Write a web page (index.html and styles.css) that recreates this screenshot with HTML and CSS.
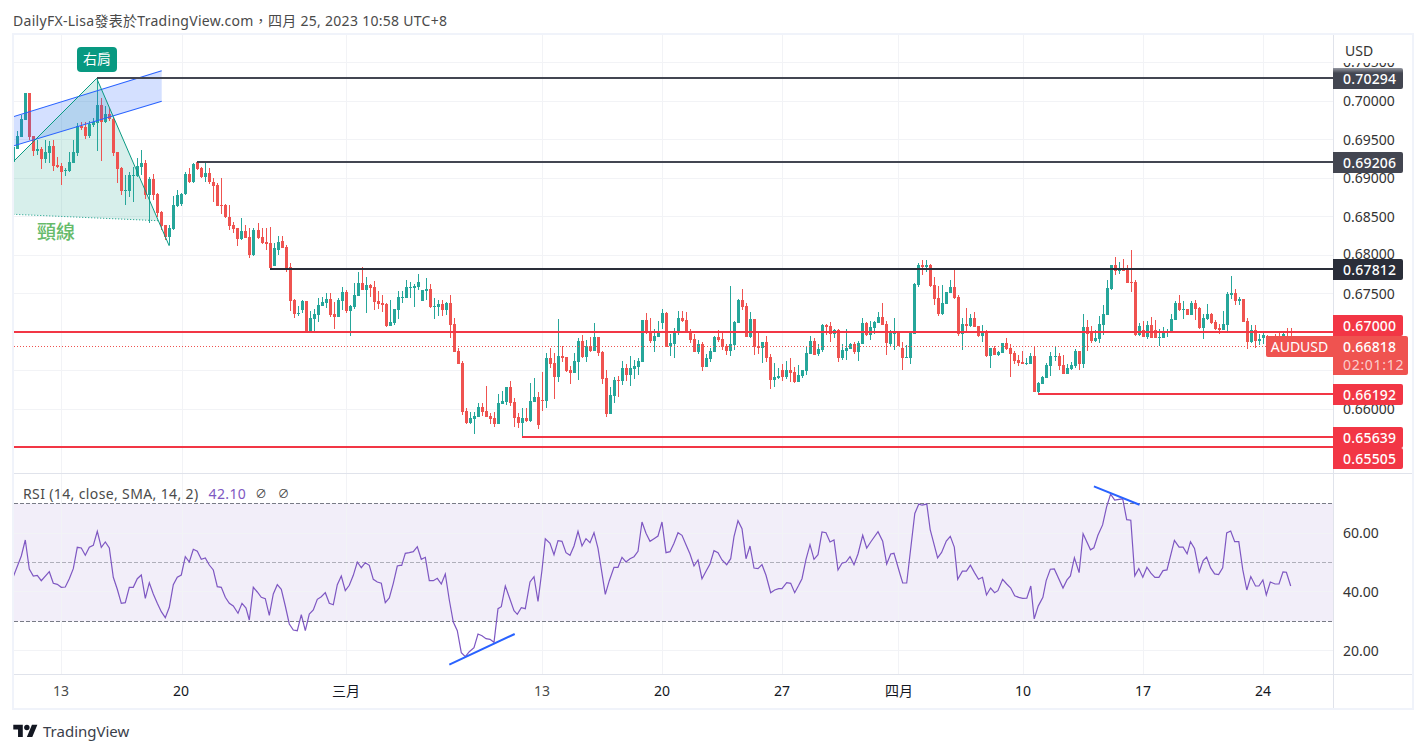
FILE: index.html
```html
<!DOCTYPE html>
<html lang="zh-Hant">
<head>
<meta charset="utf-8">
<title>AUDUSD chart</title>
<link rel="stylesheet" href="styles.css">
</head>
<body>
<header class="caption">DailyFX-Lisa發表於TradingView.com，四月 25, 2023 10:58 UTC+8</header>
<main class="frame">
  <section class="row row-price">
    <div class="plot">
      <svg class="canvas" width="1319" height="438" viewBox="14 35 1319 438" aria-hidden="true">
        <g class="grid">
          <path d="M14 62.5H1333M14 101.5H1333M14 139.5H1333M14 178.5H1333M14 216.5H1333M14 255.5H1333M14 293.5H1333M14 332.5H1333M14 370.5H1333M14 409.5H1333M14 447.5H1333"/>
          <path d="M61.5 35V473M182.5 35V473M346.5 35V473M542.5 35V473M662.5 35V473M782.5 35V473M898.5 35V473M1023.5 35V473M1143.5 35V473M1263.5 35V473"/>
        </g>
        <polygon class="pattern-fill" points="13,161.7 96.7,78.3 158,220.7 13,214.3"/>
        <path id="wicks-up" class="up-wick"/>
        <path id="wicks-down" class="down-wick"/>
        <path id="bodies-up" class="up-body"/>
        <path id="bodies-down" class="down-body"/>
        <polygon class="channel-fill" points="13.3,116.7 161.7,70.7 161.7,101.3 13.3,146"/>
        <path class="channel-line" d="M13.3 116.7L161.7 70.7M13.3 146L161.7 101.3"/>
        <polyline class="pattern-line" points="13.3,161.7 96.7,78.3 169.3,246"/>
        <path class="neck-line" d="M13.3 214.3L158 220.7"/>
        <path class="level level-dark1" d="M97 78H1333M197 162H1333"/>
        <path class="level level-dark2" d="M270 269H1333"/>
        <path class="level level-red" d="M14 332H1333M1038 394H1333M522 437H1333M14 447H1333"/>
        <path class="last-line" d="M14 346.5H1333"/>
      </svg>
      <span class="badge">右肩</span>
      <span class="neck-text">頸線</span>
      <span class="symbol">AUDUSD</span>
    </div>
    <div class="axis">
      <span class="tick t-705">0.70500</span>
      <span class="unit">USD</span>
      <span class="tick t-700">0.70000</span>
      <span class="tick t-695">0.69500</span>
      <span class="tick t-690">0.69000</span>
      <span class="tick t-685">0.68500</span>
      <span class="tick t-680">0.68000</span>
      <span class="tick t-675">0.67500</span>
      <span class="tick t-665">0.66500</span>
      <span class="tick t-660">0.66000</span>
      <span class="tag tag-fade l-70294">0.70294</span>
      <span class="tag tag-grey l-69206">0.69206</span>
      <span class="tag tag-dark l-67812">0.67812</span>
      <span class="tag tag-red l-67000">0.67000</span>
      <span class="tag tag-red l-66192">0.66192</span>
      <span class="tag tag-red l-65639">0.65639</span>
      <span class="tag tag-red l-65505">0.65505</span>
      <div class="last-price"><span>0.66818</span><span class="countdown">02:01:12</span></div>
    </div>
  </section>
  <section class="row row-rsi">
    <div class="plot">
      <svg class="canvas" width="1319" height="200" viewBox="14 474 1319 200" aria-hidden="true">
        <rect class="rsi-band" x="14" y="503.5" width="1319" height="118"/>
        <g class="grid">
          <path d="M14 533.5H1333M14 591.5H1333M14 650.5H1333"/>
          <path d="M61.5 474V674M182.5 474V674M346.5 474V674M542.5 474V674M662.5 474V674M782.5 474V674M898.5 474V674M1023.5 474V674M1143.5 474V674M1263.5 474V674"/>
        </g>
        <path class="rsi-dash" d="M14 503.5H1333M14 621.5H1333"/>
        <path class="rsi-mid" d="M14 562.5H1333"/>
        <polyline id="rsi-line" class="rsi-line"/>
        <path class="trend" d="M449.3 664.7L514.7 634M1093.9 486.4L1139.5 504.8"/>
      </svg>
      <div class="legend">
        <span>RSI (14, close, SMA, 14, 2)</span>
        <span class="legend-value">42.10</span>
        <span class="legend-null">∅</span>
        <span class="legend-null">∅</span>
      </div>
    </div>
    <div class="axis">
      <span class="tick t-r60">60.00</span>
      <span class="tick t-r40">40.00</span>
      <span class="tick t-r20">20.00</span>
    </div>
  </section>
  <section class="row row-time">
    <div class="time-scale">
      <span class="date d-1">13</span>
      <span class="date d-2">20</span>
      <span class="date d-3">三月</span>
      <span class="date d-4">13</span>
      <span class="date d-5">20</span>
      <span class="date d-6">27</span>
      <span class="date d-7">四月</span>
      <span class="date d-8">10</span>
      <span class="date d-9">17</span>
      <span class="date d-10">24</span>
    </div>
    <div class="axis axis-empty"></div>
  </section>
</main>
<footer class="brand">
  <svg class="brand-logo" width="25" height="19" viewBox="0 0 36 28" aria-hidden="true">
    <path d="M14 22H7V11H0V4h14v18zM28 22h-8l7.5-18h8L28 22z"/>
    <circle cx="20" cy="8" r="4"/>
  </svg>
  <span class="brand-name">TradingView</span>
</footer>
<script src="chart.js"></script>
</body>
</html>
```

FILE: styles.css
```css
* { box-sizing: border-box; }
html, body { margin: 0; padding: 0; background: #fff; }
body {
  width: 1426px;
  height: 753px;
  overflow: hidden;
  font-family: "Noto Sans", "Noto Sans CJK JP", sans-serif;
  font-size: 14px;
  color: #131722;
}
.caption {
  height: 33px;
  padding: 11px 0 0 13px;
  line-height: 19px;
  color: #4a4a4a;
  letter-spacing: .29px;
  white-space: nowrap;
}
.frame {
  width: 1402px;
  height: 677px;
  margin-left: 12px;
  border: 2px solid #f0f3fa;
  display: flex;
  flex-direction: column;
}
.row { display: flex; border-bottom: 1px solid #e0e3eb; }
.row-price { height: 439px; }
.row-rsi { height: 201px; }
.row-time { height: 33px; border-bottom: 0; }
.plot { position: relative; width: 1319px; height: 100%; overflow: visible; }
.canvas { display: block; }
.axis {
  position: relative;
  width: 79px;
  border-left: 1px solid #e0e3eb;
  color: #333;
}

/* chart drawing */
.grid path { fill: none; stroke: #f2f3f6; stroke-width: 1; }
.pattern-fill { fill: rgba(8, 153, 129, .16); }
.channel-fill { fill: rgba(41, 98, 255, .2); }
.channel-line { fill: none; stroke: #2962ff; stroke-width: 1.1; }
.pattern-line { fill: none; stroke: #089981; stroke-width: 1; }
.neck-line { fill: none; stroke: #089981; stroke-width: 1; stroke-dasharray: 1 2; }
.up-wick, .up-body { fill: #26a69a; shape-rendering: crispEdges; }
.down-wick, .down-body { fill: #ef5350; shape-rendering: crispEdges; }
.level { fill: none; stroke-width: 2; shape-rendering: crispEdges; }
.level-dark1 { stroke: #434651; }
.level-dark2 { stroke: #2a2e39; }
.level-red { stroke: #f23645; }
.last-line { fill: none; stroke: #ef5350; stroke-width: 1; stroke-dasharray: 1 2; }
.rsi-band { fill: rgba(126, 87, 194, .1); }
.rsi-dash { fill: none; stroke: #787b86; stroke-width: 1; stroke-dasharray: 4 2; }
.rsi-mid { fill: none; stroke: rgba(120, 123, 134, .55); stroke-width: 1; stroke-dasharray: 4 2; }
.rsi-line { fill: none; stroke: #7e57c2; stroke-width: 1.2; }
.trend { fill: none; stroke: #2962ff; stroke-width: 2; }

/* overlays on the plot */
.badge {
  position: absolute;
  left: 63px;
  top: 12px;
  width: 40px;
  height: 25px;
  border-radius: 4px;
  background: #089981;
  color: #fff;
  font-size: 14px;
  line-height: 24px;
  text-align: center;
}
.neck-text {
  position: absolute;
  left: 23px;
  top: 184px;
  color: #66bb6a;
  font-size: 19px;
  line-height: 26px;
  font-weight: 500;
}
.symbol {
  position: absolute;
  left: 1252px;
  top: 301px;
  width: 67px;
  height: 21px;
  border-radius: 2px 0 0 2px;
  background: #ef5350;
  color: #fff;
  line-height: 21px;
  text-align: center;
}
.legend {
  position: absolute;
  left: 9px;
  top: 10px;
  display: flex;
  color: #4a4a4a;
  line-height: 20px;
  letter-spacing: .37px;
  white-space: nowrap;
}
.legend-value { margin-left: 10px; color: #7e57c2; }
.legend-null { margin-left: 11px; font-size: 11.5px; letter-spacing: 0; }
.legend-value + .legend-null { margin-left: 9px; }

/* price scale: every label is placed by its price */
.tick {
  position: absolute;
  left: 9px;
  line-height: 18px;
  white-space: nowrap;
}
.unit {
  position: absolute;
  left: 0;
  top: 0;
  width: 78px;
  height: 28px;
  padding: 7px 0 0 11px;
  line-height: 18px;
  background: #fff;
  color: #333;
}
.t-705 { top: 18px; }
.t-700 { top: 57px; }
.t-695 { top: 96px; }
.t-690 { top: 134px; }
.t-685 { top: 173px; }
.t-680 { top: 210px; }
.t-675 { top: 250px; }
.t-665 { top: 326px; }
.t-660 { top: 365px; }
.t-r60 { top: 50px; }
.t-r40 { top: 109px; }
.t-r20 { top: 168px; }
.tag {
  position: absolute;
  left: -1px;
  width: 70px;
  height: 21px;
  padding-left: 10px;
  border-radius: 0 2px 2px 0;
  color: #fff;
  font-weight: 500;
  letter-spacing: .2px;
  line-height: 21px;
}
.tag-grey { background: #434651; }
.tag-fade { background: linear-gradient(#9598a1 0, #434651 5px); }
.tag-dark { background: #2a2e39; }
.tag-red { background: #f23645; }
.l-70294 { top: 33px; }
.l-69206 { top: 117px; }
.l-67812 { top: 224px; }
.l-67000 { top: 280px; }
.l-66192 { top: 349px; }
.l-65639 { top: 392px; }
.l-65505 { top: 413px; }
.last-price {
  position: absolute;
  left: -1px;
  top: 301px;
  width: 75px;
  height: 39px;
  padding-left: 10px;
  border-radius: 0 2px 2px 0;
  background: #ef5350;
  color: #fff;
  font-weight: 500;
  letter-spacing: .2px;
  line-height: 18px;
  display: flex;
  flex-direction: column;
  justify-content: center;
}
.countdown { color: rgba(255, 255, 255, .72); font-weight: 400; letter-spacing: .7px; }

/* time scale */
.time-scale { position: relative; width: 1319px; height: 100%; }
.date {
  position: absolute;
  top: 6px;
  width: 40px;
  margin-left: -20px;
  text-align: center;
  line-height: 20px;
}
.d-1 { left: 47px; color: #4a4a4a; }
.d-2 { left: 167px; }
.d-3 { left: 332px; }
.d-4 { left: 528px; color: #4a4a4a; }
.d-5 { left: 648px; }
.d-6 { left: 768px; }
.d-7 { left: 885px; }
.d-8 { left: 1009px; }
.d-9 { left: 1129px; }
.d-10 { left: 1249px; }

/* footer */
.brand {
  display: flex;
  align-items: center;
  height: 24px;
  margin: 9px 0 0 13px;
}
.brand-logo { fill: #131722; display: block; }
.brand-name { margin-left: 5px; font-size: 15px; color: #3a3e4a; line-height: 20px; }
```

FILE: chart.js
```javascript
// Candles: colour, body top, body bottom, wick top, wick bottom (pixel rows of the page).
var CANDLES = "g147,162,147,162 g136,149,131,149 g119,137,115,137 g93,120,93,120 r93,137,93,140 r136,151,136,156 g149,151,140,155 r149,159,147,169 g152,159,140,163 g146,153,141,163 r146,166,140,171 r165,167,157,168 r166,172,163,185 g170,171,168,176 g162,171,152,172 g152,163,140,163 g126,153,123,156 r126,128,122,130 r127,136,122,139 g124,136,121,138 g122,125,118,127 g105,123,78,151 r105,122,98,161 g114,122,106,123 r114,119,108,121 r119,153,117,156 r152,169,152,183 r168,191,167,195 g190,191,175,205 g175,191,172,197 g175,176,167,202 g166,176,158,177 g163,167,150,175 r163,195,160,199 g179,195,177,223 r179,195,174,200 r194,213,193,217 r212,226,211,230 r225,237,225,240 g228,237,225,245 g205,229,196,230 g195,206,190,207 g194,204,193,206 g174,194,172,195 r174,182,168,183 g164,182,163,183 r162,169,161,170 r168,177,167,178 g173,177,162,182 r173,182,168,184 r182,186,178,202 r185,206,183,206 r205,206,178,214 r205,217,204,218 r217,226,205,230 r225,229,222,233 r228,239,228,246 g231,239,218,240 r231,238,225,238 r237,255,228,258 g230,255,228,256 r230,238,223,239 r237,243,228,244 r242,244,228,250 r243,268,227,268 g248,266,243,266 g242,250,236,255 r241,248,236,248 r247,268,245,272 " +
"r267,301,263,311 r300,314,299,318 g313,314,306,316 g301,310,300,313 r301,333,301,333 g318,333,311,333 g314,319,309,332 g305,315,298,322 g302,306,297,306 g299,303,293,308 r299,315,293,317 r314,317,302,329 g300,317,298,317 g292,301,287,310 r292,311,290,313 g306,311,305,336 g295,307,283,309 g283,296,272,296 r283,290,267,290 g285,290,277,313 r285,288,284,297 r287,302,281,310 r301,304,291,309 r303,305,295,312 r304,326,303,327 g322,326,300,326 g309,323,309,325 g297,310,291,319 g297,298,291,303 g287,298,280,298 g287,288,282,298 g286,288,284,307 g282,287,274,290 g290,301,290,301 g289,291,278,300 r289,307,284,308 g306,307,298,319 g304,307,300,316 r304,310,300,316 g303,310,302,315 r303,325,295,338 r324,352,318,352 r351,364,348,364 r363,412,361,415 r411,423,408,424 g418,423,412,424 g416,419,412,434 g407,417,403,417 r407,412,403,416 r411,417,386,417 r416,419,413,424 r418,424,412,427 g403,424,394,424 g401,404,391,404 g387,402,387,405 r387,403,381,406 r402,418,398,427 r417,423,413,428 g418,423,408,437 r418,421,408,422 g401,421,383,422 g397,402,378,402 r397,425,392,429 r400,401,372,411 g358,401,353,408 r358,364,348,368 r363,377,353,399 g356,377,319,382 r356,358,346,362 r357,371,357,372 r370,373,366,384 g361,373,353,373 g341,362,338,380 r341,357,335,358 g346,357,340,362 r346,351,337,352 g337,351,323,351 r337,353,337,356 r352,379,351,384 r378,414,370,417 g395,414,387,414 " +
"g380,396,377,403 r380,381,376,397 g368,381,361,385 r368,375,364,381 g368,375,356,386 g366,369,360,379 g361,367,358,375 g320,362,320,362 r320,332,313,334 r332,341,318,343 g336,341,329,352 g333,337,321,337 g313,323,309,329 r313,347,312,347 g343,346,334,356 g331,344,328,358 g318,332,311,335 r318,321,311,322 r320,332,312,332 r331,340,329,343 r339,352,334,352 g344,352,340,354 r344,367,342,371 g358,367,354,367 g351,359,348,362 g337,352,336,352 r337,340,330,342 r339,347,332,350 r346,351,344,355 g344,351,286,356 g322,345,321,350 g300,323,299,323 r300,307,289,310 r306,337,303,337 g319,337,312,338 r319,347,319,355 r346,348,331,354 g342,348,342,363 r342,358,336,362 r357,380,354,389 g377,380,363,387 g376,378,368,379 r370,377,364,381 g370,377,361,379 r370,373,358,382 r372,382,367,383 g375,382,365,382 g370,376,370,378 g353,371,347,375 g341,354,336,354 r341,355,338,355 g349,354,344,356 g325,350,324,352 r325,327,324,335 r326,334,322,342 g330,334,329,338 r330,358,329,362 g350,358,344,360 g348,351,329,360 g344,349,343,349 r344,352,342,354 g343,352,341,361 g323,344,318,344 r323,335,322,336 g327,335,321,340 g322,328,321,334 g317,323,312,323 r317,325,303,325 r324,343,321,355 g332,344,330,346 g332,334,318,350 r332,346,332,346 r348,358,342,370 g357,358,345,358 g332,358,331,364 g284,334,283,334 " +
"g265,285,263,287 r265,267,260,275 g265,267,260,272 r265,286,264,287 r285,299,277,305 r298,314,286,316 g303,314,285,315 g292,304,292,304 g287,293,280,293 r287,298,270,299 r297,334,295,336 g324,334,318,350 r324,326,308,332 g318,326,314,327 r318,327,312,327 r326,336,326,337 g332,336,325,342 r331,356,330,357 g348,356,348,368 r348,355,346,355 g352,355,351,356 g343,353,343,353 r343,349,338,350 r348,354,344,377 r353,361,351,364 r360,363,355,366 r362,364,351,364 g363,364,358,365 g356,364,353,364 r356,392,347,392 g383,392,382,394 g377,384,376,384 g365,378,363,378 g356,366,352,376 g356,357,347,361 r356,366,353,370 r365,374,355,374 g368,374,364,374 g365,369,362,370 g351,366,349,368 r351,364,351,370 g327,364,314,368 r327,334,320,351 r333,341,326,343 g338,341,330,342 g324,339,316,343 g314,325,305,335 g288,315,280,315 g265,289,265,290 r265,271,257,275 g268,271,262,274 r268,271,259,271 r268,283,265,283 r282,283,250,292 r282,335,280,336 g326,335,323,336 r330,337,321,337 g325,337,321,339 r325,338,317,338 r330,338,320,338 g337,338,329,346 g331,338,327,338 g331,332,329,337 g319,332,314,332 g303,320,301,320 r303,310,295,311 g309,310,301,319 r309,315,309,315 g303,315,301,315 r303,309,300,320 r308,328,307,329 g318,328,314,339 g314,319,304,320 r314,323,313,324 r322,329,320,330 r328,330,324,334 g324,330,311,330 g294,325,292,332 g293,295,276,299 r293,301,289,305 g299,301,297,305 r299,322,299,322 r321,342,318,349 g330,342,325,343 r330,341,325,348 g339,341,334,345 g335,338,333,344 r336,342,335,345 g339,346,337,352 r336,340,334,344 r336,341,333,344 g334,338,332,342 r336,340,328,343 r336,338,328,345";

function candlePaths() {
  var wu = "", wd = "", bu = "", bd = "";
  CANDLES.split(/\s+/).forEach(function (item, k) {
    if (!item) return;
    var up = item.charAt(0) === "g";
    var v = item.slice(1).split(",").map(Number);
    var col = Math.round(13.2 + 4.005 * k);
    var w = "M" + col + " " + v[2] + "h1V" + Math.max(v[3], v[2] + 1) + "h-1z";
    var b = "M" + (col - 1) + " " + v[0] + "h3V" + Math.max(v[1], v[0] + 1) + "h-3z";
    if (up) { wu += w; bu += b; } else { wd += w; bd += b; }
  });
  document.getElementById("wicks-up").setAttribute("d", wu);
  document.getElementById("wicks-down").setAttribute("d", wd);
  document.getElementById("bodies-up").setAttribute("d", bu);
  document.getElementById("bodies-down").setAttribute("d", bd);
}

// RSI vertices, in three traced stretches: origin x, origin y, scale, then x,y pairs.
var RSI = [
  [0, 470, 1 / 3, [40,320,64,258,76,210,88,297,100,318,112,316,124,332,148,305,160,340,172,343,184,352,196,351,208,326,220,296,232,232,244,234,256,256,268,232,280,226,292,184,304,232,316,216,328,234,340,322,352,358,364,400,376,398,388,352,400,352,412,326,424,315,436,385,448,338,460,372,472,400,484,425,496,443,508,412,520,344,532,322,544,315,556,260,568,276,580,238,592,244,604,268,616,264,628,285,640,300,652,350,664,352,676,382,688,400,700,408,714,430,726,400,738,414,748,450,760,352,772,366,784,382,796,386,808,436,820,372,832,344,844,358,856,408,868,462,880,480,892,482,904,434,916,482,928,432,940,420,952,388,964,380,976,368,988,400,1000,404,1012,344,1024,318,1036,362,1048,346,1060,316,1072,276,1084,293,1096,278,1108,286,1120,328,1132,336,1144,340,1156,398,1168,384,1180,340,1192,288,1200,286]],
  [400, 480, 1 / 3, [5,256,16,220,28,218,40,215,52,200,64,238,76,232,88,302,100,302,112,295,124,312,136,282,148,360,160,426,172,452,184,518,196,530,208,515,222,503,234,462,246,467,258,476,270,478,282,487,294,386,304,380,316,318,328,352,342,392,352,403,364,383,376,386,390,306,402,290,414,364,426,270,436,176,450,190,462,224,474,182,486,184,498,218,510,226,522,198,534,154,546,198,558,176,570,188,582,158,594,205,606,280,616,343,628,302,642,262,654,262,666,232,678,246,690,236,702,230,714,214,726,126,738,160,750,184,762,176,774,168,786,126,798,218,810,215,822,190,834,158,846,166,858,194,870,222,882,258,894,240,906,296,918,274,930,252,942,212,954,218,966,240,980,254,992,236,1002,170,1014,122,1026,146,1038,236,1050,198,1062,264,1074,266,1086,254,1098,286,1112,338,1124,330,1136,326,1146,326,1160,308,1172,310,1184,338,1196,316,1206,296,1218,238,1230,194,1242,238,1254,224,1266,156,1278,158,1290,186,1302,180,1314,270,1326,250,1338,246,1350,230,1362,254,1374,222,1388,166,1400,204,1412,186,1434,155,1448,184,1460,252,1472,222,1482,220,1500,282]],
  [900, 480, 0.3354, [8,307,20,307,44,100,56,72,66,75,80,72,90,148,112,232,124,216,138,182,150,168,162,200,172,296,186,272,198,272,210,254,222,276,234,296,246,290,258,343,270,322,282,336,292,330,306,296,318,310,330,322,342,345,354,350,366,353,378,352,390,316,400,414,412,376,426,350,436,300,448,266,460,265,486,322,498,298,508,286,520,232,534,276,546,160,568,208,578,202,590,165,604,134,616,80,628,42,640,60,664,56,676,118,688,120,700,286,712,264,724,290,736,260,748,278,760,290,772,290,784,270,796,268,818,180,832,200,844,200,856,220,866,184,878,204,892,274,904,240,914,230,926,262,938,280,950,282,962,262,974,158,986,152,998,184,1010,184,1022,268,1034,328,1046,288,1060,316,1070,316,1082,298,1092,343,1104,304,1118,310,1130,310,1142,274,1152,275,1165,316]]
];

function rsiLine() {
  var pts = [];
  RSI.forEach(function (stretch) {
    var p = stretch[3];
    for (var i = 0; i < p.length; i += 2) {
      pts.push((stretch[0] + p[i] * stretch[2]).toFixed(1) + "," + (stretch[1] + p[i + 1] * stretch[2]).toFixed(1));
    }
  });
  document.getElementById("rsi-line").setAttribute("points", pts.join(" "));
}

candlePaths();
rsiLine();
```
